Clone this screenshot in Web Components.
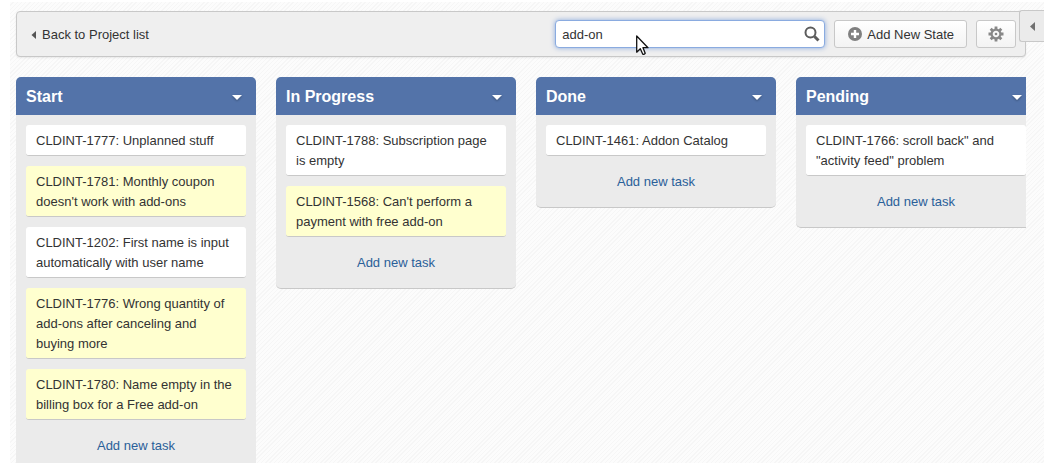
<!DOCTYPE html>
<html lang="en">
<head>
<meta charset="utf-8">
<title>Project board</title>
<style>
  html { background: #fff; }
  body {
    margin: 0;
    font: 13px/20px "Liberation Sans", Arial, sans-serif;
    color: #333;
  }
</style>
</head>
<body>
<board-app>
  <board-toolbar slot="toolbar">
    <back-link slot="start">Back to Project list</back-link>
    <search-field value="add-on"></search-field>
    <tool-button><plus-icon slot="icon"></plus-icon>Add New State</tool-button>
    <tool-button label="Settings"><gear-icon slot="icon"></gear-icon></tool-button>
  </board-toolbar>
  <side-tab slot="side"></side-tab>

  <board-column heading="Start">
    <task-card>CLDINT-1777: Unplanned stuff</task-card>
    <task-card match>CLDINT-1781: Monthly coupon doesn't work with add-ons</task-card>
    <task-card>CLDINT-1202: First name is input automatically with user name</task-card>
    <task-card match>CLDINT-1776: Wrong quantity of add-ons after canceling and buying more</task-card>
    <task-card match>CLDINT-1780: Name empty in the billing box for a Free add-on</task-card>
  </board-column>
  <board-column heading="In Progress">
    <task-card>CLDINT-1788: Subscription page is empty</task-card>
    <task-card match>CLDINT-1568: Can't perform a payment with free add-on</task-card>
  </board-column>
  <board-column heading="Done">
    <task-card>CLDINT-1461: Addon Catalog</task-card>
  </board-column>
  <board-column heading="Pending">
    <task-card>CLDINT-1766: scroll back" and "activity feed" problem</task-card>
  </board-column>
</board-app>

<script>
function define(name, render) {
  customElements.define(name, class extends HTMLElement {
    constructor() {
      super();
      this.attachShadow({ mode: 'open' });
    }
    connectedCallback() {
      const template = document.createElement('template');
      template.innerHTML = render(this);
      this.shadowRoot.replaceChildren(template.content.cloneNode(true));
    }
  });
}

define('board-app', () => `
  <style>
    :host {
      display: block; box-sizing: border-box; position: relative; overflow: hidden;
      height: calc(100vh - 4px); margin: 2px 10px; padding: 9px 18px 0 6px;
      background: repeating-linear-gradient(135deg, #fcfcfc 0 2px, #f6f6f6 2px 3px);
    }
    main { display: flex; align-items: flex-start; gap: 20px; margin-top: 20px; overflow: hidden; }
  </style>
  <slot name="toolbar"></slot>
  <main><slot></slot></main>
  <slot name="side"></slot>`);

define('board-toolbar', () => `
  <style>
    :host {
      display: flex; align-items: center; gap: 9px; box-sizing: border-box;
      padding: 8px 9px 8px 14px; border: 1px solid #c8c8c8; border-radius: 4px;
      background: #efefef; box-shadow: 0 1px 2px rgba(0,0,0,.08);
    }
    .start { flex: 1; padding-top: 2px; }
  </style>
  <div class="start"><slot name="start"></slot></div>
  <slot></slot>`);

define('back-link', () => `
  <style>
    :host { display: block; }
    a { display: flex; width: max-content; align-items: center; gap: 6px; color: inherit; text-decoration: none; }
    svg { display: block; }
  </style>
  <a href="#projects"><svg width="5" height="8" viewBox="0 0 5 8" aria-hidden="true"><path d="M5 0v8L0.500 4z" fill="#555"/></svg><slot></slot></a>`);

define('search-field', el => `
  <style>
    :host { display: block; position: relative; flex: 0 1 270px; }
    input {
      display: block; box-sizing: border-box; width: 100%; height: 28px; padding: 0 28px 0 6px;
      border: 1px solid #8aabe0; border-radius: 4px; outline: none; background: #fff;
      box-shadow: 0 0 5px rgba(82,130,210,.65); font: inherit; color: inherit;
    }
    .glass { position: absolute; right: 5px; top: 6px; }
    .pointer { position: absolute; left: 81px; top: 15px; pointer-events: none; }
  </style>
  <input type="text" aria-label="Search tasks" value="${el.getAttribute('value')}">
  <svg class="glass" width="16" height="16" viewBox="0 0 16 16" fill="none" stroke="#5c5c5c" aria-hidden="true">
    <circle cx="6.500" cy="6.500" r="5" stroke-width="2"/><path d="M10.500 10.500l4 4" stroke-width="3"/>
  </svg>
  <svg class="pointer" width="13" height="21" viewBox="0 0 13 21" aria-hidden="true">
    <path d="M.7 1v16.200l3.600-3.500 2.500 5.500q1.300.5 2.400-.9L7 12.700h5z" fill="#fff" stroke="#111" stroke-width="1.300" stroke-linejoin="round"/>
  </svg>`);

define('tool-button', el => `
  <style>
    :host { display: block; flex: none; }
    button {
      display: flex; align-items: center; gap: 4px; box-sizing: border-box; height: 28px; padding: 0 12px;
      border: 1px solid #c8c8c8; border-radius: 3px; background: linear-gradient(#fff, #f3f3f3);
      font: inherit; color: inherit; white-space: nowrap;
    }
    :host([label]) button { padding: 0 11px; }
    .label { padding-top: 2px; }
    :host([label]) .label { display: none; }
  </style>
  <button type="button"${el.hasAttribute('label') ? ` aria-label="${el.getAttribute('label')}"` : ''}><slot name="icon"></slot><span class="label"><slot></slot></span></button>`);

define('plus-icon', () => `
  <style>:host, svg { display: block; }</style>
  <svg width="16" height="16" viewBox="0 0 16 16" aria-hidden="true">
    <circle cx="8" cy="8" r="7" fill="#808080"/><path d="M8 4v8M4 8h8" stroke="#fff" stroke-width="2.400"/>
  </svg>`);

define('gear-icon', () => `
  <style>:host, svg { display: block; }</style>
  <svg width="16" height="16" viewBox="-8 -8 16 16" fill="none" stroke="#888" aria-hidden="true">
    <circle r="4.400" stroke-width="2.200"/>
    <circle r="1.300" fill="#888" stroke="none"/>
    <g stroke-width="2.800">
      <path d="M0-5v-2.500M0 5v2.500M-5 0h-2.500M5 0h2.500"/>
      <path d="M0-5v-2.500M0 5v2.500M-5 0h-2.500M5 0h2.500" transform="rotate(45)"/>
    </g>
  </svg>`);

define('side-tab', () => `
  <style>
    :host { display: block; position: absolute; right: 0; top: 8px; }
    button {
      display: flex; align-items: center; justify-content: center; box-sizing: border-box;
      width: 25px; height: 32px; padding: 0; border: 1px solid #c8c8c8; border-right: 0;
      border-radius: 3px 0 0 3px; background: #ebebeb;
    }
  </style>
  <button type="button" aria-label="Open side panel"><svg width="5" height="9" viewBox="0 0 5 9" aria-hidden="true"><path d="M5 0v9L0 4.500z" fill="#707070"/></svg></button>`);

define('board-column', el => `
  <style>
    :host {
      display: block; flex: 0 0 240px; box-sizing: border-box; overflow: hidden;
      border-bottom: 1px solid #c8c8c8; border-radius: 5px; background: #ebebeb;
    }
    header {
      display: flex; align-items: center; justify-content: space-between; box-sizing: border-box;
      height: 38px; padding: 2px 10px 0; background: #5373a9; color: #fff;
    }
    h2 { margin: 0; font-size: 16px; line-height: 20px; }
    button { display: flex; align-items: center; justify-content: center; width: 18px; height: 20px; padding: 0; border: 0; background: none; }
    svg { filter: drop-shadow(0 1px 1px rgba(0,0,0,.3)); }
    .tasks { display: grid; gap: 10px; padding: 10px 10px 0; }
    footer { padding: 16px 10px 15px; text-align: center; }
    a { color: #2a6099; text-decoration: none; }
  </style>
  <header>
    <h2>${el.getAttribute('heading')}</h2>
    <button type="button" aria-label="${el.getAttribute('heading')} menu"><svg width="10" height="5" viewBox="0 0 10 5"><path d="M0 0h10L5 5z" fill="#fff"/></svg></button>
  </header>
  <div class="tasks"><slot></slot></div>
  <footer><a href="#new-task">Add new task</a></footer>`);

define('task-card', () => `
  <style>
    :host {
      display: block; padding: 6px 10px 4px; border-bottom: 1px solid #c8c8c8;
      border-radius: 3px; background: #fff;
    }
    :host([match]) { background: #ffffcf; }
  </style>
  <slot></slot>`);
</script>
</body>
</html>
